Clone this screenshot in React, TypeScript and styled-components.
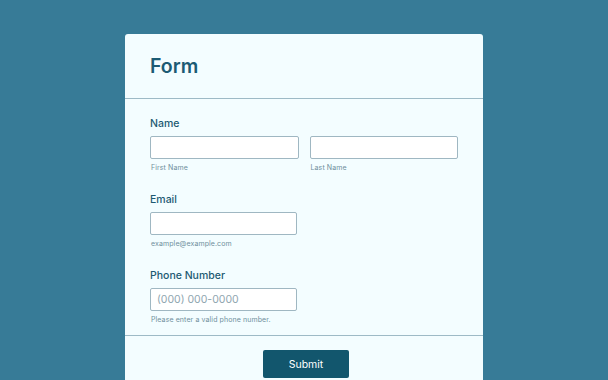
import styled, { createGlobalStyle } from "styled-components";

const GlobalStyle = createGlobalStyle`
  html, body {
    margin: 0;
    padding: 0;
    background: #377b97;
    font-family: Inter, "Noto Sans", sans-serif;
  }
`;

const Page = styled.div`
  width: 608px;
  height: 380px;
  overflow: hidden;
  display: flex;
  justify-content: center;
  padding-top: 34px;
  box-sizing: border-box;
`;

const Card = styled.form`
  width: 358px;
  height: 360px;
  background: #f3fdff;
  border-radius: 3px 3px 0 0;
  display: flex;
  flex-direction: column;
  flex-shrink: 0;
`;

const Header = styled.div`
  padding: 20px 25px 20px;
  border-bottom: 1px solid #9dbac6;
`;

const Title = styled.h1`
  margin: 0;
  font-size: 19.5px;
  line-height: 24px;
  font-weight: 600;
  color: #1b5b74;
`;

const Body = styled.div`
  padding: 18px 25px 10px;
  border-bottom: 1px solid #9dbac6;
  display: flex;
  flex-direction: column;
  gap: 20px;
`;

const Field = styled.div`
  display: flex;
  flex-direction: column;
`;

const Label = styled.label`
  font-size: 10.5px;
  line-height: 14px;
  font-weight: 500;
  color: #1d5a72;
  margin-bottom: 5px;
`;

const Row = styled.div`
  display: grid;
  grid-template-columns: 1fr 1fr;
  gap: 11px;
`;

const Group = styled.div<{ $width?: number }>`
  display: flex;
  flex-direction: column;
  width: ${(p) => (p.$width ? `${p.$width}px` : "auto")};
`;

const Input = styled.input`
  box-sizing: border-box;
  width: 100%;
  height: 23px;
  border: 1px solid #9fb7c2;
  border-radius: 2px;
  background: #ffffff;
  padding: 0 6px;
  font-family: inherit;
  font-size: 10.5px;
  color: #1d5a72;
  outline: none;

  &::placeholder {
    color: #8fa6b0;
  }
`;

const Hint = styled.span`
  margin-top: 3px;
  padding-left: 1px;
  font-size: 7px;
  line-height: 11px;
  letter-spacing: 0.1px;
  color: #6f8f9d;
`;

const Footer = styled.div`
  display: flex;
  justify-content: center;
  padding: 14px 0 0 4px;
`;

const SubmitButton = styled.button`
  width: 86px;
  height: 28px;
  border: none;
  border-radius: 2px;
  background: #12566d;
  color: #ffffff;
  font-family: inherit;
  font-size: 10.5px;
  cursor: pointer;
`;

export default function App() {
  return (
    <>
      <GlobalStyle />
      <Page>
        <Card onSubmit={(e) => e.preventDefault()}>
          <Header>
            <Title>Form</Title>
          </Header>
          <Body>
            <Field>
              <Label>Name</Label>
              <Row>
                <Group>
                  <Input type="text" />
                  <Hint>First Name</Hint>
                </Group>
                <Group>
                  <Input type="text" />
                  <Hint>Last Name</Hint>
                </Group>
              </Row>
            </Field>
            <Field>
              <Label>Email</Label>
              <Group $width={147}>
                <Input type="email" />
                <Hint>example@example.com</Hint>
              </Group>
            </Field>
            <Field>
              <Label>Phone Number</Label>
              <Group $width={147}>
                <Input type="tel" placeholder="(000) 000-0000" />
                <Hint>Please enter a valid phone number.</Hint>
              </Group>
            </Field>
          </Body>
          <Footer>
            <SubmitButton type="submit">Submit</SubmitButton>
          </Footer>
        </Card>
      </Page>
    </>
  );
}
